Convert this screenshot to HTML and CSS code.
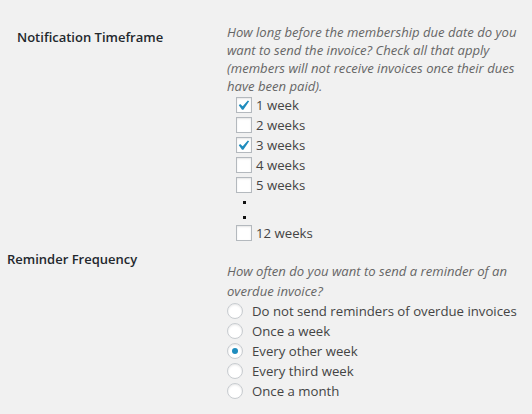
FILE: index.html
```
<!DOCTYPE html>
<html>
<head>
<meta charset="utf-8">
<link rel="stylesheet" href="styles.css">
</head>
<body>
<div class="page">
  <div class="section s1">
    <div class="label l1">Notification Timeframe</div>
    <div class="field f1">
      <p class="desc d1">How long before the membership due date do you<br>want to send the invoice? Check all that apply<br>(members will not receive invoices once their dues<br>have been paid).</p>
      <div class="checks">
        <label class="opt"><span class="box on"><svg viewBox="3 1.5 16 16" width="16" height="16"><path d="M14.83 4.89l1.34.94-5.81 8.38H9.02L5.78 9.67l1.34-1.25 2.570 2.4z" fill="#1e8cbe"/></svg></span>1 week</label>
        <label class="opt"><span class="box"></span>2 weeks</label>
        <label class="opt"><span class="box on"><svg viewBox="3 1.5 16 16" width="16" height="16"><path d="M14.83 4.89l1.34.94-5.81 8.38H9.02L5.78 9.67l1.34-1.25 2.570 2.4z" fill="#1e8cbe"/></svg></span>3 weeks</label>
        <label class="opt"><span class="box"></span>4 weeks</label>
        <label class="opt"><span class="box"></span>5 weeks</label>
        <div class="dots"><span class="dot"></span><span class="dot"></span></div>
        <label class="opt"><span class="box"></span>12 weeks</label>
      </div>
    </div>
  </div>
  <div class="section s2">
    <div class="label l2">Reminder Frequency</div>
    <div class="field f2">
      <p class="desc d2">How often do you want to send a reminder of an<br>overdue invoice?</p>
      <div class="radios">
        <label class="opt"><span class="radio"></span>Do not send reminders of overdue invoices</label>
        <label class="opt"><span class="radio"></span>Once a week</label>
        <label class="opt"><span class="radio on"></span>Every other week</label>
        <label class="opt"><span class="radio"></span>Every third week</label>
        <label class="opt"><span class="radio"></span>Once a month</label>
      </div>
    </div>
  </div>
</div>
</body>
</html>
```
FILE: styles.css
```
html, body {
  margin: 0;
  padding: 0;
  background: #f1f1f1;
}
body {
  font-family: "Open Sans", "Noto Sans", sans-serif;
  color: #444;
  width: 532px;
  height: 414px;
  overflow: hidden;
}
.section {
  display: flex;
}
.label {
  width: 227px;
  box-sizing: border-box;
  font-size: 13px;
  font-weight: 600;
  line-height: 20px;
  color: #23282d;
}
.l1 {
  padding-left: 17px;
  padding-top: 27px;
}
.l2 {
  padding-left: 7px;
  padding-top: 6px;
}
.field {
  flex: 1;
}
.desc {
  margin: 0;
  font-size: 13.1px;
  font-style: italic;
  color: #666;
  white-space: nowrap;
}
.d1 {
  padding-top: 23px;
  line-height: 18px;
}
.d2 {
  padding-top: 18px;
  line-height: 20px;
}
.checks {
  padding-left: 9px;
  display: flex;
  flex-direction: column;
}
.radios {
  display: flex;
  flex-direction: column;
}
.opt {
  display: flex;
  align-items: center;
  height: 20px;
  font-size: 13.2px;
  color: #444;
  white-space: nowrap;
}
.box {
  width: 16px;
  height: 16px;
  box-sizing: border-box;
  border: 1px solid #b4b9be;
  background: #fff;
  box-shadow: inset 0 1px 2px rgba(0,0,0,0.1);
  margin-right: 4px;
  display: flex;
  align-items: center;
  justify-content: center;
  overflow: visible;
}
.box svg {
  display: block;
  flex: none;
  margin: -1px;
}
.radio {
  width: 16px;
  height: 16px;
  box-sizing: border-box;
  border: 1px solid #c8ccd0;
  border-radius: 50%;
  background: #fff;
  box-shadow: inset 0 1px 2px rgba(0,0,0,0.1);
  margin-right: 9px;
  display: flex;
  align-items: center;
  justify-content: center;
}
.radio.on::before {
  content: "";
  width: 6px;
  height: 6px;
  border-radius: 50%;
  background: #1e8cbe;
}
.dots {
  height: 28px;
  display: flex;
  flex-direction: column;
  align-items: flex-start;
  padding-left: 7px;
  padding-top: 6px;
  box-sizing: border-box;
  gap: 12px;
}
.dot {
  width: 3px;
  height: 3px;
  background: #111;
}
```
